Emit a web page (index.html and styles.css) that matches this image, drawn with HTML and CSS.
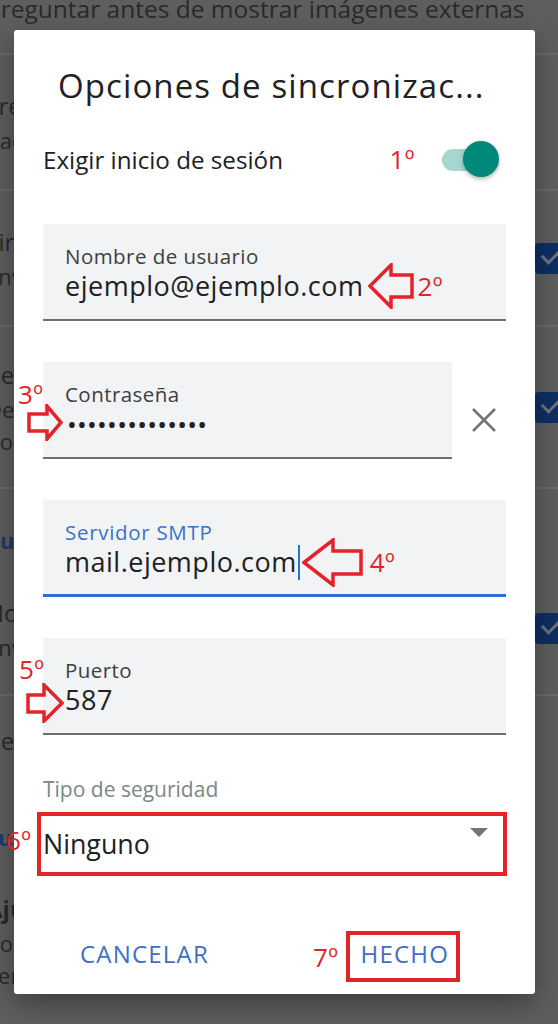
FILE: index.html
```html
<!DOCTYPE html>
<html lang="es">
<head>
    <meta charset="UTF-8">
    <meta name="viewport" content="width=device-width, initial-scale=1.0">
    <title>Opciones de sincronización</title>
    <link rel="stylesheet" href="styles.css">
</head>
<body>
    <div class="settings">
        <div class="setting setting-cut">
            <div class="setting-text">
                <p class="setting-sub">Preguntar antes de mostrar imágenes externas</p>
            </div>
        </div>
        <div class="setting setting-two">
            <div class="setting-text">
                <p class="setting-title">Frecuencia de sincronización</p>
                <p class="setting-sub">Cada 15 minutos</p>
            </div>
        </div>
        <div class="setting setting-two">
            <div class="setting-text">
                <p class="setting-title">Firmar mensajes</p>
                <p class="setting-sub">Enviar firma al final</p>
            </div>
            <span class="checkbox"></span>
        </div>
        <div class="setting setting-three">
            <div class="setting-text">
                <p class="setting-title">Reenviar mensajes</p>
                <p class="setting-sub">Descargar adjuntos automáticamente</p>
                <p class="setting-sub">Correo reciente por Wi-Fi</p>
            </div>
            <span class="checkbox"></span>
        </div>
        <p class="settings-header">Cuenta</p>
        <div class="setting setting-notify">
            <div class="setting-text">
                <p class="setting-title">Notificaciones</p>
                <p class="setting-sub">Enviar notificación de correo nuevo</p>
            </div>
            <span class="checkbox"></span>
        </div>
        <div class="setting setting-one">
            <div class="setting-text">
                <p class="setting-title">Remitente</p>
            </div>
        </div>
        <p class="settings-header">Suscripciones</p>
        <div class="setting setting-last">
            <div class="setting-text">
                <p class="setting-title setting-bold">Ajustes del servidor</p>
                <p class="setting-sub">Correo entrante</p>
                <p class="setting-sub">Servidor de salida</p>
            </div>
        </div>
    </div>

    <div class="dialog">
        <h1 class="dialog-title">Opciones de sincronizac...</h1>

        <div class="switch-row">
            <span class="switch-label">Exigir inicio de sesión</span>
            <span class="step">1º</span>
            <span class="switch"><span class="switch-thumb"></span></span>
        </div>

        <div class="fields">
            <div class="field">
                <div class="field-label">Nombre de usuario</div>
                <div class="field-value">
                    ejemplo@ejemplo.com
                    <svg class="arrow arrow-2" width="46" height="46" viewBox="0 0 46 46">
                        <path d="M2 23 L23 2 V12 H44 V34 H23 V44 Z" fill="none" stroke="#e2232a" stroke-width="3.5"/>
                    </svg>
                    <span class="step step-2">2º</span>
                </div>
            </div>

            <div class="field-row">
                <div class="field">
                    <span class="step step-side step-3">3º</span>
                    <svg class="arrow arrow-side arrow-3" width="36" height="37" viewBox="0 0 36 37">
                        <path d="M2 10 H20 V2 L34 18.5 L20 35 V27 H2 Z" fill="none" stroke="#e2232a" stroke-width="3.5"/>
                    </svg>
                    <div class="field-label">Contraseña</div>
                    <div class="field-value password">••••••••••••••</div>
                </div>
                <svg class="clear-icon" width="26" height="26" viewBox="0 0 26 26">
                    <path d="M2 2 L24 24 M24 2 L2 24" stroke="#757575" stroke-width="2.6"/>
                </svg>
            </div>

            <div class="field field-focused">
                <div class="field-label">Servidor SMTP</div>
                <div class="field-value">
                    mail.ejemplo.com<span class="cursor"></span>
                    <svg class="arrow arrow-4" width="61" height="49" viewBox="0 0 61 49">
                        <path d="M2 24.5 L31 2 V13 H59 V36 H31 V47 Z" fill="none" stroke="#e2232a" stroke-width="3.5"/>
                    </svg>
                    <span class="step step-4">4º</span>
                </div>
            </div>

            <div class="field">
                <span class="step step-side step-5">5º</span>
                <svg class="arrow arrow-side arrow-5" width="38" height="40" viewBox="0 0 38 40">
                    <path d="M2 12 H18 V2 L36 20 L18 38 V29 H2 Z" fill="none" stroke="#e2232a" stroke-width="3.5"/>
                </svg>
                <div class="field-label">Puerto</div>
                <div class="field-value">587</div>
            </div>
        </div>

        <div class="security-label">Tipo de seguridad</div>
        <div class="select">
            <span class="step step-6">6º</span>
            <span>Ninguno</span>
            <svg class="select-arrow" width="18" height="9" viewBox="0 0 18 9">
                <path d="M0 0 H18 L9 9 Z" fill="#757575"/>
            </svg>
        </div>

        <div class="actions">
            <span class="button button-cancel">CANCELAR</span>
            <span class="step step-7">7º</span>
            <span class="button button-marked">HECHO</span>
        </div>
    </div>
</body>
</html>
```

FILE: styles.css
```css
* {
    box-sizing: border-box;
}

body {
    margin: 0;
    width: 558px;
    height: 1024px;
    overflow: hidden;
    position: relative;
    background-color: #5e5e5e;
    font-family: "Open Sans", "Noto Sans", sans-serif;
}

p {
    margin: 0;
}

/* ajustes de fondo, tapados por el diálogo */
.settings {
    color: #2a2a2a;
}

.setting {
    display: flex;
    align-items: center;
    border-bottom: 2px solid #6b6b6b;
}

.setting-text {
    flex: 1;
    margin-left: -14px;
    white-space: nowrap;
    overflow: hidden;
}

.setting-title {
    font-size: 24px;
    line-height: 36px;
}

.setting-bold {
    font-weight: 700;
}

.setting-sub {
    font-size: 22px;
    line-height: 32px;
}

.setting-cut {
    height: 55px;
    align-items: flex-start;
}

.setting-cut .setting-sub {
    font-size: 24.5px;
    margin-top: -7px;
}

.setting-two {
    height: 136px;
}

.setting-three {
    height: 162px;
}

.setting-notify {
    height: 117px;
    padding-bottom: 16px;
}

.setting-one {
    height: 90px;
    border-bottom: none;
}

.setting-last {
    height: 130px;
    border-bottom: none;
}

.settings-header {
    margin-left: -14px;
    padding-top: 36px;
    height: 90px;
    font-size: 22px;
    font-weight: 700;
    color: #1c3a70;
}

.checkbox {
    width: 31px;
    height: 31px;
    margin-right: -8px;
    border-radius: 4px;
    background-color: #0e2f63;
    position: relative;
}

.checkbox::after {
    content: "";
    position: absolute;
    left: 7px;
    top: 6px;
    width: 15px;
    height: 8px;
    border-left: 3px solid #6f7378;
    border-bottom: 3px solid #6f7378;
    transform: rotate(-45deg);
}

/* diálogo */
.dialog {
    position: absolute;
    top: 30px;
    left: 14px;
    width: 521px;
    height: 964px;
    padding: 36px 29px 0;
    background-color: white;
    border-radius: 3px;
    box-shadow: 0 10px 28px rgba(0, 0, 0, 0.35);
    color: #202124;
}

.dialog-title {
    margin: 0;
    padding-left: 15px;
    font-size: 33px;
    font-weight: 400;
    line-height: 40px;
    letter-spacing: 1.1px;
    white-space: nowrap;
}

.step {
    color: #e2232a;
    font-family: "Open Sans", "Noto Sans", sans-serif;
    font-size: 26px;
    line-height: 30px;
    letter-spacing: 0.5px;
}

.switch-row {
    display: flex;
    align-items: center;
    height: 44px;
    margin-top: 31px;
}

.switch-label {
    flex: 1;
    font-size: 24.2px;
}

.switch {
    position: relative;
    width: 57px;
    height: 44px;
    margin: 0 7px 0 27px;
}

.switch::before {
    content: "";
    position: absolute;
    left: 0;
    top: 12px;
    width: 54px;
    height: 22px;
    border-radius: 11px;
    background-color: #a7d6cf;
}

.switch-thumb {
    position: absolute;
    right: 0;
    top: 4px;
    width: 36px;
    height: 36px;
    border-radius: 50%;
    background-color: #00897b;
    box-shadow: 0 2px 4px rgba(0, 0, 0, 0.3);
}

.fields {
    display: flex;
    flex-direction: column;
    gap: 41px;
    margin-top: 43px;
}

.field {
    position: relative;
    padding: 20px 22px 17px;
    background-color: #f1f3f4;
    border-bottom: 2px solid #6d6f72;
    border-radius: 2px 2px 0 0;
}

.field-label {
    font-size: 20.5px;
    line-height: 24px;
    letter-spacing: 0.45px;
    color: #3c4043;
}

.field-value {
    display: flex;
    align-items: center;
    height: 32px;
    margin-top: 2px;
    font-size: 27px;
    line-height: 32px;
    letter-spacing: 0.5px;
    white-space: nowrap;
}

.field-focused {
    padding-bottom: 16px;
    border-bottom: 3px solid #2c6fd1;
}

.field-focused .field-label {
    letter-spacing: 0.7px;
    color: #3a72c9;
}

.cursor {
    display: inline-block;
    width: 2px;
    height: 35px;
    margin-left: 1px;
    background-color: #2c6fd1;
}

.field-row {
    display: flex;
    align-items: center;
}

.field-row .field {
    flex: 1;
}

.clear-icon {
    margin: 19px 9px 0 19px;
}

.password {
    font-size: 26px;
    letter-spacing: 0.25px;
    padding-left: 2px;
}

.arrow {
    flex-shrink: 0;
}

.arrow-2 {
    margin-left: 5px;
}

.step-2 {
    margin-left: 3px;
}

.arrow-4 {
    margin-left: 2px;
}

.step-4 {
    margin-left: 7px;
}

.step-side {
    position: absolute;
    left: -25px;
    top: 17px;
}

.arrow-side {
    position: absolute;
}

.arrow-3 {
    left: -16px;
    top: 42px;
}

.step-5 {
    left: -24px;
    top: 16px;
}

.arrow-5 {
    left: -17px;
    top: 45px;
}

.security-label {
    margin-top: 42px;
    font-size: 21px;
    line-height: 24px;
    color: #80868b;
}

.select {
    position: relative;
    display: flex;
    justify-content: space-between;
    align-items: flex-start;
    margin: 11px -1px 0 -6px;
    padding: 12px 15px 12px 2px;
    border: 4px solid #e2232a;
    font-size: 26.8px;
    line-height: 32px;
}

.step-6 {
    position: absolute;
    left: -35px;
    top: 9px;
}

.actions {
    display: flex;
    align-items: center;
    margin-top: 55px;
}

.button {
    color: #3d6fc6;
    font-size: 24px;
    line-height: 33px;
    letter-spacing: 1.2px;
}

.button-cancel {
    margin: 0 auto 6px 37px;
}

.step-7 {
    margin-right: 8px;
}

.button-marked {
    margin-right: 46px;
    padding: 2px 7px 8px 10px;
    border: 4px solid #e2232a;
}
```
